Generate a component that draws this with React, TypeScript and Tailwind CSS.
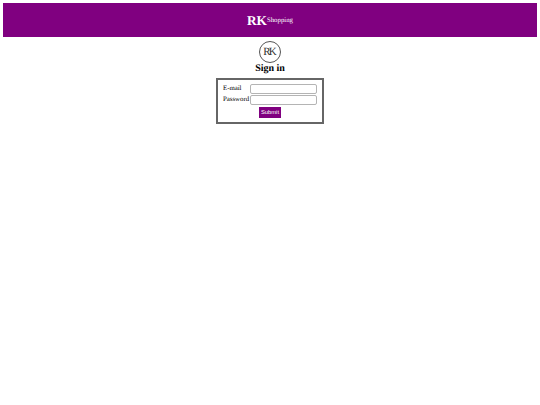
import React from 'react'

const Logo = () => (
  <div className="flex h-[22px] w-[22px] items-center justify-center rounded-full border border-[#555] bg-white">
    <span className="pr-[2px] text-[11px] leading-none tracking-[-2px] text-[#333]">RK</span>
  </div>
)

export default function App() {
  return (
    <div className="min-h-[405px] bg-white p-[3px] font-['Liberation_Serif',serif] text-black antialiased [text-rendering:geometricPrecision]">
      {/* Banner */}
      <div className="flex h-[34px] items-center justify-center bg-[#800080] pt-[1px] text-white">
        <span className="text-[13.3px] font-bold leading-none">RK</span>
        <span className="mt-[2px] text-[6.8px] leading-none">Shopping</span>
      </div>

      <div className="mt-[4px] flex flex-col items-center">
        <Logo />
        <h1 className="text-[10px] font-bold leading-[12px]">Sign in</h1>

        {/* Form box */}
        <form className="mt-[3px] flex h-[46px] w-[108px] flex-col border-2 border-[#666] pl-[5px] pt-[3px] text-[6.8px]">
          <div className="flex h-[11px] items-center">
            <label className="w-[27px] pt-[1px] leading-none">E-mail</label>
            <input className="h-[10px] w-[67px] rounded-[2px] border border-[#b4b4b4] bg-white" />
          </div>
          <div className="flex h-[11px] items-center">
            <label className="w-[27px] pt-[1px] leading-none">Password</label>
            <input className="h-[10px] w-[67px] rounded-[2px] border border-[#b4b4b4] bg-white" />
          </div>
          <button
            type="button"
            className="mt-[2px] ml-[36px] h-[11px] w-[22px] bg-[#800080] font-['Liberation_Sans',sans-serif] text-[5.8px] leading-none text-white"
          >
            Submit
          </button>
        </form>
      </div>
    </div>
  )
}
